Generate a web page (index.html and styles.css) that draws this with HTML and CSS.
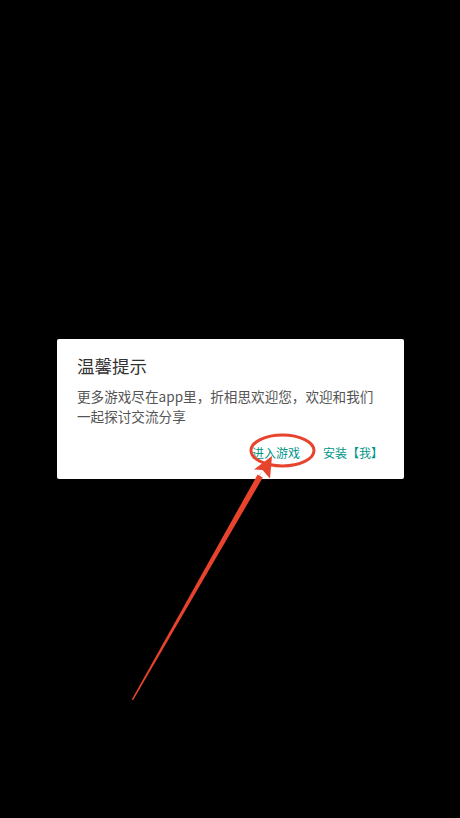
FILE: index.html
```html
<!DOCTYPE html>
<html lang="zh">
<head>
<meta charset="utf-8">
<link rel="stylesheet" href="styles.css">
</head>
<body>
<div class="screen">
  <div class="dialog">
    <div class="title">温馨提示</div>
    <div class="message">更多游戏尽在app里，折相思欢迎您，欢迎和我们一起探讨交流分享</div>
    <div class="actions">
      <span class="btn">进入游戏</span>
      <span class="btn">安装【我】</span>
    </div>
  </div>
  <svg class="annotation" width="460" height="818" viewBox="0 0 460 818">
    <ellipse cx="282.5" cy="450.5" rx="31.5" ry="15.5" fill="none" stroke="#e8432d" stroke-width="3"/>
    <polygon fill="#e8432d" points="132,699.5 133,699.8 262.5,470 254,469.5 272,456 270,478.5 262.5,470 260,475 132.5,700"/>
    <polygon fill="#e8432d" points="131.8,699.5 257.6,474.6 262.8,477.6 133,700.2"/>
  </svg>
</div>
</body>
</html>
```

FILE: styles.css
```css
html, body {
  margin: 0;
  padding: 0;
  background: #000;
}
.screen {
  position: relative;
  width: 460px;
  height: 818px;
  padding-top: 339px;
  box-sizing: border-box;
  font-family: "Noto Sans CJK SC", "Noto Sans", sans-serif;
}
.dialog {
  width: 347px;
  margin-left: 57px;
  background: #fff;
  border-radius: 2px;
  padding: 15px 21px 9px 20px;
  box-sizing: border-box;
}
.title {
  font-size: 17.5px;
  line-height: 24px;
  color: #333;
}
.message {
  margin-top: 8px;
  font-size: 13.6px;
  line-height: 20px;
  color: #555;
}
.actions {
  margin-top: 8px;
  height: 36px;
  display: flex;
  justify-content: flex-end;
  align-items: center;
  gap: 23px;
}
.btn {
  font-size: 12px;
  color: #00968a;
}
.annotation {
  position: absolute;
  left: 0;
  top: 0;
  pointer-events: none;
}
```
